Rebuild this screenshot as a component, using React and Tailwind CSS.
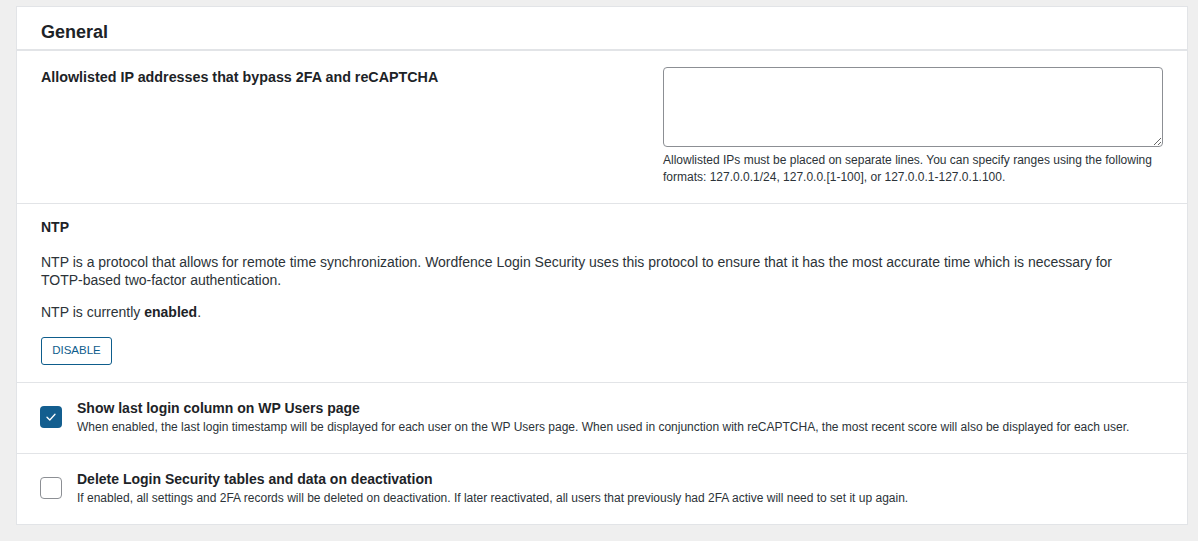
export default function App() {
  return (
    <div className="min-h-[541px] w-full bg-[#efefef] pt-[6px] px-[16px] pb-[16px] font-['Liberation_Sans',Arial,sans-serif] text-[#1d2327]">
      <div className="w-[1172px] border border-[#e2e4e7] bg-white">
        <div className="border-b-2 border-[#e2e4e7] px-[24px] pt-[14px] pb-[6px]">
          <h2 className="text-[18px] font-bold leading-[22px] text-[#1d2327]">General</h2>
        </div>

        <div className="flex justify-between border-b border-[#e2e4e7] px-[24px] pt-[16px] pb-[17px]">
          <div className="pt-[1px] text-[14.3px] font-bold leading-[18px]">
            Allowlisted IP addresses that bypass 2FA and reCAPTCHA
          </div>
          <div className="w-[500px]">
            <textarea className="block h-[80px] w-[500px] rounded-[4px] border border-[#8c8f94] bg-white"></textarea>
            <p className="mt-[5px] text-[12px] leading-[17px] text-[#2c3338]">
              Allowlisted IPs must be placed on separate lines. You can specify ranges using the following formats: 127.0.0.1/24, 127.0.0.[1-100], or 127.0.0.1-127.0.1.100.
            </p>
          </div>
        </div>

        <div className="border-b border-[#e2e4e7] px-[24px] pt-[14px] pb-[17px]">
          <h3 className="text-[14px] font-bold leading-[18px]">NTP</h3>
          <p className="mt-[17px] pr-[30px] text-[14px] leading-[18px] text-[#2c3338]">
            NTP is a protocol that allows for remote time synchronization. Wordfence Login Security uses this protocol to ensure that it has the most accurate time which is necessary for TOTP-based two-factor authentication.
          </p>
          <p className="mt-[14px] text-[14px] leading-[18px] text-[#2c3338]">
            NTP is currently <b className="text-[#1d2327]">enabled</b>.
          </p>
          <button className="mt-[16px] h-[28px] w-[71px] rounded-[3px] border border-[#0e5d8c] bg-white text-[11.5px] leading-none text-[#0e5d8c]">
            DISABLE
          </button>
        </div>

        <div className="flex items-start gap-[15px] border-b border-[#e2e4e7] px-[23px] pt-[16px] pb-[18px]">
          <div className="mt-[7px] flex h-[22px] w-[22px] shrink-0 items-center justify-center rounded-[4px] bg-[#135e8f]">
            <svg width="10" height="8" viewBox="0 0 10 8" fill="none">
              <path d="M1 4.2 L3.8 7 L9 1.2" stroke="white" strokeWidth="1.3" strokeLinecap="round" strokeLinejoin="round" />
            </svg>
          </div>
          <div>
            <div className="text-[14px] font-bold leading-[18px]">Show last login column on WP Users page</div>
            <div className="mt-[2px] text-[12px] leading-[16px] text-[#2c3338]">
              When enabled, the last login timestamp will be displayed for each user on the WP Users page. When used in conjunction with reCAPTCHA, the most recent score will also be displayed for each user.
            </div>
          </div>
        </div>

        <div className="flex items-start gap-[15px] px-[23px] pt-[16px] pb-[18px]">
          <div className="mt-[7px] h-[22px] w-[22px] shrink-0 rounded-[4px] border border-[#8c8f94] bg-white"></div>
          <div>
            <div className="text-[14px] font-bold leading-[18px]">Delete Login Security tables and data on deactivation</div>
            <div className="mt-[2px] text-[12px] leading-[16px] text-[#2c3338]">
              If enabled, all settings and 2FA records will be deleted on deactivation. If later reactivated, all users that previously had 2FA active will need to set it up again.
            </div>
          </div>
        </div>
      </div>
    </div>
  );
}
